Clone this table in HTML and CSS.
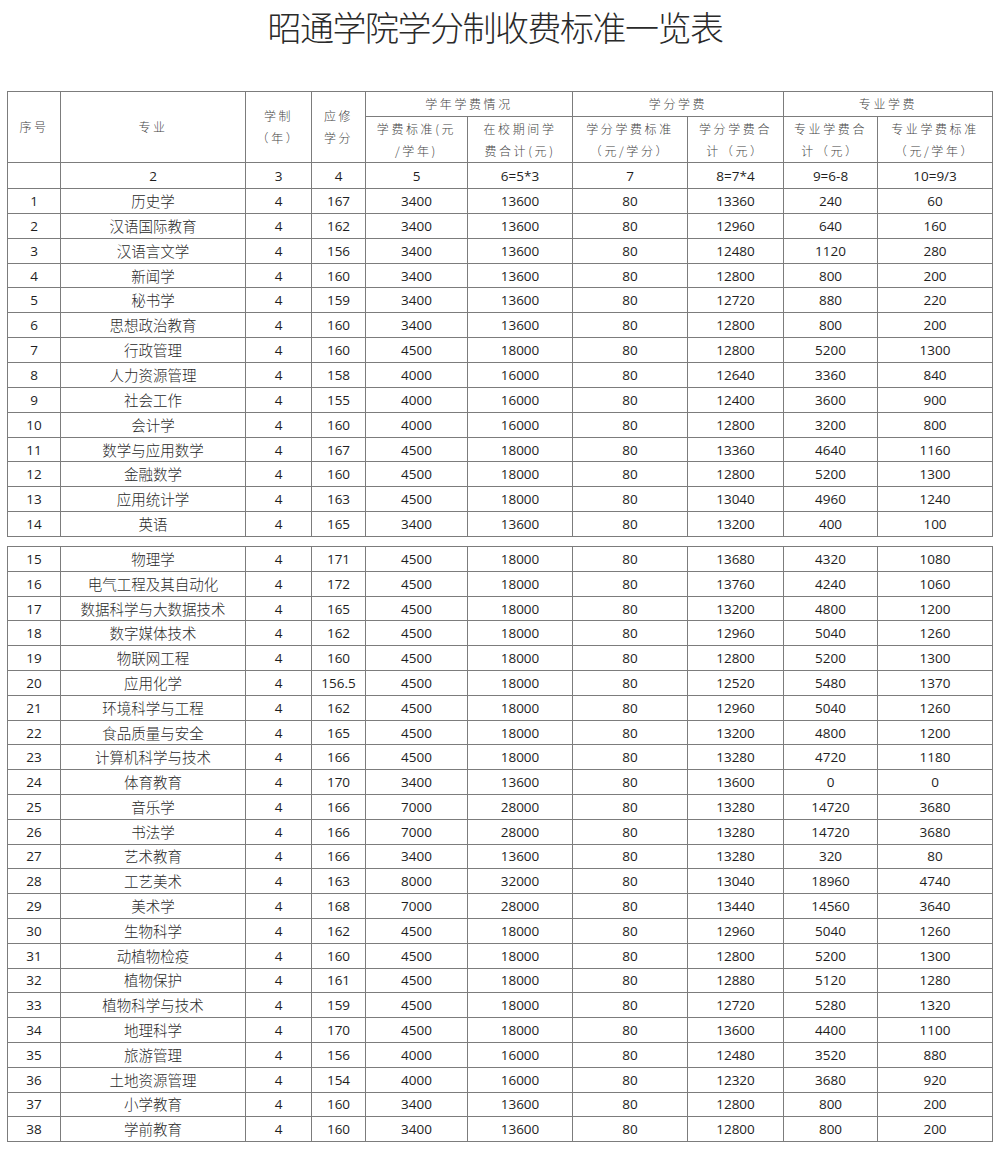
FILE: index.html
```html
<!DOCTYPE html>
<html lang="zh-CN">
<head>
<meta charset="utf-8">
<title>昭通学院学分制收费标准一览表</title>
<link rel="stylesheet" href="styles.css">
</head>
<body>
<div class="title">昭通学院学分制收费标准一览表</div>
<table class="sheet first">
<colgroup>
<col class="c1"><col class="c2"><col class="c3"><col class="c4"><col class="c5"><col class="c6"><col class="c7"><col class="c8"><col class="c9"><col class="c10">
</colgroup>
<thead>
<tr class="ha">
<th rowspan="2" class="hd">序号</th>
<th rowspan="2" class="hd">专业</th>
<th rowspan="2" class="hd">学制<br>（年）</th>
<th rowspan="2" class="hd">应修<br>学分</th>
<th colspan="2" class="hd">学年学费情况</th>
<th colspan="2" class="hd">学分学费</th>
<th colspan="2" class="hd">专业学费</th>
</tr>
<tr class="hb">
<th class="hd">学费标准(元<br>/学年)</th>
<th class="hd">在校期间学<br>费合计(元)</th>
<th class="hd">学分学费标准<br>（元/学分）</th>
<th class="hd">学分学费合<br>计（元）</th>
<th class="hd">专业学费合<br>计（元）</th>
<th class="hd">专业学费标准<br>（元/学年）</th>
</tr>
<tr class="hn">
<td></td><td>2</td><td>3</td><td>4</td><td>5</td><td>6=5*3</td><td>7</td><td>8=7*4</td><td>9=6-8</td><td>10=9/3</td>
</tr>
</thead>
<tbody>
<tr><td>1</td><td class="nm">历史学</td><td>4</td><td>167</td><td>3400</td><td>13600</td><td>80</td><td>13360</td><td>240</td><td>60</td></tr>
<tr><td>2</td><td class="nm">汉语国际教育</td><td>4</td><td>162</td><td>3400</td><td>13600</td><td>80</td><td>12960</td><td>640</td><td>160</td></tr>
<tr><td>3</td><td class="nm">汉语言文学</td><td>4</td><td>156</td><td>3400</td><td>13600</td><td>80</td><td>12480</td><td>1120</td><td>280</td></tr>
<tr><td>4</td><td class="nm">新闻学</td><td>4</td><td>160</td><td>3400</td><td>13600</td><td>80</td><td>12800</td><td>800</td><td>200</td></tr>
<tr><td>5</td><td class="nm">秘书学</td><td>4</td><td>159</td><td>3400</td><td>13600</td><td>80</td><td>12720</td><td>880</td><td>220</td></tr>
<tr><td>6</td><td class="nm">思想政治教育</td><td>4</td><td>160</td><td>3400</td><td>13600</td><td>80</td><td>12800</td><td>800</td><td>200</td></tr>
<tr><td>7</td><td class="nm">行政管理</td><td>4</td><td>160</td><td>4500</td><td>18000</td><td>80</td><td>12800</td><td>5200</td><td>1300</td></tr>
<tr><td>8</td><td class="nm">人力资源管理</td><td>4</td><td>158</td><td>4000</td><td>16000</td><td>80</td><td>12640</td><td>3360</td><td>840</td></tr>
<tr><td>9</td><td class="nm">社会工作</td><td>4</td><td>155</td><td>4000</td><td>16000</td><td>80</td><td>12400</td><td>3600</td><td>900</td></tr>
<tr><td>10</td><td class="nm">会计学</td><td>4</td><td>160</td><td>4000</td><td>16000</td><td>80</td><td>12800</td><td>3200</td><td>800</td></tr>
<tr><td>11</td><td class="nm">数学与应用数学</td><td>4</td><td>167</td><td>4500</td><td>18000</td><td>80</td><td>13360</td><td>4640</td><td>1160</td></tr>
<tr><td>12</td><td class="nm">金融数学</td><td>4</td><td>160</td><td>4500</td><td>18000</td><td>80</td><td>12800</td><td>5200</td><td>1300</td></tr>
<tr><td>13</td><td class="nm">应用统计学</td><td>4</td><td>163</td><td>4500</td><td>18000</td><td>80</td><td>13040</td><td>4960</td><td>1240</td></tr>
<tr><td>14</td><td class="nm">英语</td><td>4</td><td>165</td><td>3400</td><td>13600</td><td>80</td><td>13200</td><td>400</td><td>100</td></tr>
</tbody>
</table>
<table class="sheet second">
<colgroup>
<col class="c1"><col class="c2"><col class="c3"><col class="c4"><col class="c5"><col class="c6"><col class="c7"><col class="c8"><col class="c9"><col class="c10">
</colgroup>
<tbody>
<tr><td>15</td><td class="nm">物理学</td><td>4</td><td>171</td><td>4500</td><td>18000</td><td>80</td><td>13680</td><td>4320</td><td>1080</td></tr>
<tr><td>16</td><td class="nm">电气工程及其自动化</td><td>4</td><td>172</td><td>4500</td><td>18000</td><td>80</td><td>13760</td><td>4240</td><td>1060</td></tr>
<tr><td>17</td><td class="nm">数据科学与大数据技术</td><td>4</td><td>165</td><td>4500</td><td>18000</td><td>80</td><td>13200</td><td>4800</td><td>1200</td></tr>
<tr><td>18</td><td class="nm">数字媒体技术</td><td>4</td><td>162</td><td>4500</td><td>18000</td><td>80</td><td>12960</td><td>5040</td><td>1260</td></tr>
<tr><td>19</td><td class="nm">物联网工程</td><td>4</td><td>160</td><td>4500</td><td>18000</td><td>80</td><td>12800</td><td>5200</td><td>1300</td></tr>
<tr><td>20</td><td class="nm">应用化学</td><td>4</td><td>156.5</td><td>4500</td><td>18000</td><td>80</td><td>12520</td><td>5480</td><td>1370</td></tr>
<tr><td>21</td><td class="nm">环境科学与工程</td><td>4</td><td>162</td><td>4500</td><td>18000</td><td>80</td><td>12960</td><td>5040</td><td>1260</td></tr>
<tr><td>22</td><td class="nm">食品质量与安全</td><td>4</td><td>165</td><td>4500</td><td>18000</td><td>80</td><td>13200</td><td>4800</td><td>1200</td></tr>
<tr><td>23</td><td class="nm">计算机科学与技术</td><td>4</td><td>166</td><td>4500</td><td>18000</td><td>80</td><td>13280</td><td>4720</td><td>1180</td></tr>
<tr><td>24</td><td class="nm">体育教育</td><td>4</td><td>170</td><td>3400</td><td>13600</td><td>80</td><td>13600</td><td>0</td><td>0</td></tr>
<tr><td>25</td><td class="nm">音乐学</td><td>4</td><td>166</td><td>7000</td><td>28000</td><td>80</td><td>13280</td><td>14720</td><td>3680</td></tr>
<tr><td>26</td><td class="nm">书法学</td><td>4</td><td>166</td><td>7000</td><td>28000</td><td>80</td><td>13280</td><td>14720</td><td>3680</td></tr>
<tr><td>27</td><td class="nm">艺术教育</td><td>4</td><td>166</td><td>3400</td><td>13600</td><td>80</td><td>13280</td><td>320</td><td>80</td></tr>
<tr><td>28</td><td class="nm">工艺美术</td><td>4</td><td>163</td><td>8000</td><td>32000</td><td>80</td><td>13040</td><td>18960</td><td>4740</td></tr>
<tr><td>29</td><td class="nm">美术学</td><td>4</td><td>168</td><td>7000</td><td>28000</td><td>80</td><td>13440</td><td>14560</td><td>3640</td></tr>
<tr><td>30</td><td class="nm">生物科学</td><td>4</td><td>162</td><td>4500</td><td>18000</td><td>80</td><td>12960</td><td>5040</td><td>1260</td></tr>
<tr><td>31</td><td class="nm">动植物检疫</td><td>4</td><td>160</td><td>4500</td><td>18000</td><td>80</td><td>12800</td><td>5200</td><td>1300</td></tr>
<tr><td>32</td><td class="nm">植物保护</td><td>4</td><td>161</td><td>4500</td><td>18000</td><td>80</td><td>12880</td><td>5120</td><td>1280</td></tr>
<tr><td>33</td><td class="nm">植物科学与技术</td><td>4</td><td>159</td><td>4500</td><td>18000</td><td>80</td><td>12720</td><td>5280</td><td>1320</td></tr>
<tr><td>34</td><td class="nm">地理科学</td><td>4</td><td>170</td><td>4500</td><td>18000</td><td>80</td><td>13600</td><td>4400</td><td>1100</td></tr>
<tr><td>35</td><td class="nm">旅游管理</td><td>4</td><td>156</td><td>4000</td><td>16000</td><td>80</td><td>12480</td><td>3520</td><td>880</td></tr>
<tr><td>36</td><td class="nm">土地资源管理</td><td>4</td><td>154</td><td>4000</td><td>16000</td><td>80</td><td>12320</td><td>3680</td><td>920</td></tr>
<tr><td>37</td><td class="nm">小学教育</td><td>4</td><td>160</td><td>3400</td><td>13600</td><td>80</td><td>12800</td><td>800</td><td>200</td></tr>
<tr><td>38</td><td class="nm">学前教育</td><td>4</td><td>160</td><td>3400</td><td>13600</td><td>80</td><td>12800</td><td>800</td><td>200</td></tr>
</tbody>
</table>
</body>
</html>
```
FILE: styles.css
```css
html, body {
  margin: 0;
  padding: 0;
  background: #ffffff;
}

body {
  font-family: "Open Sans", "Noto Sans CJK SC", sans-serif;
  color: #1e1e1e;
}

.title {
  box-sizing: border-box;
  height: 91px;
  padding-top: 9px;
  padding-right: 10px;
  text-align: center;
  font-family: "Noto Sans CJK SC", sans-serif;
  font-weight: 300;
  font-size: 34px;
  line-height: 36px;
  letter-spacing: -1.5px;
  color: #2a2a2a;
}

.sheet {
  border-collapse: collapse;
  table-layout: fixed;
  width: 986px;
  margin-left: 7px;
}

.sheet.second {
  margin-top: 9px;
}

.c1 { width: 53px; }
.c2 { width: 185px; }
.c3 { width: 66px; }
.c4 { width: 54px; }
.c5 { width: 102px; }
.c6 { width: 105px; }
.c7 { width: 115px; }
.c8 { width: 96px; }
.c9 { width: 94px; }
.c10 { width: 115px; }

.sheet td,
.sheet th {
  border: 1px solid #7c7c7c;
  padding: 0;
  text-align: center;
  vertical-align: middle;
  font-weight: normal;
  font-size: 13.5px;
  line-height: 18px;
  white-space: nowrap;
  overflow: hidden;
}

.sheet .hd {
  font-family: "Noto Sans CJK SC", sans-serif;
  font-weight: 300;
  font-size: 12px;
  line-height: 22px;
  letter-spacing: 2.6px;
  color: #444444;
}

.ha { height: 25px; }
.hb { height: 46px; }
.hn { height: 26px; }

.sheet tbody tr { height: 24.86px; }
.sheet.second tbody tr { height: 24.8px; }

.sheet .nm {
  font-family: "Noto Sans CJK SC", sans-serif;
  font-weight: 300;
  font-size: 14.5px;
  color: #2a2a2a;
}
```
